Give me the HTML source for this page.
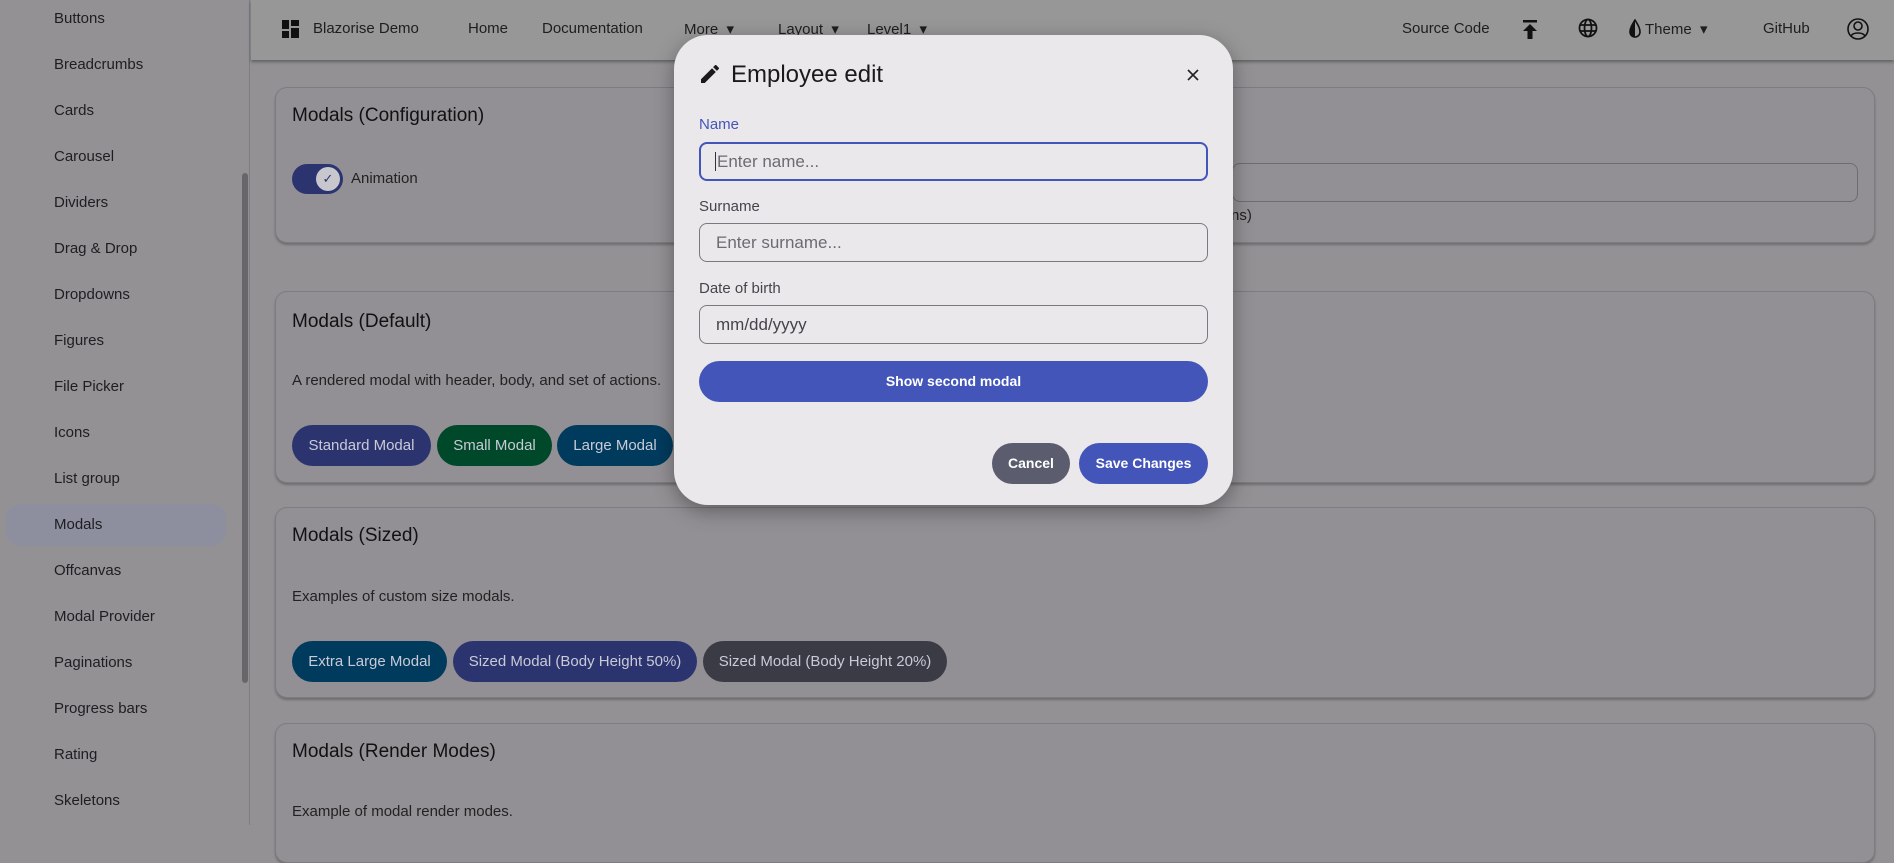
<!DOCTYPE html>
<html style="background:#939194"><head><meta charset="utf-8"><style>
*{box-sizing:border-box;margin:0;padding:0}
html,body{background:#939194}
body{width:1894px;height:825px;overflow:hidden;font-family:"Liberation Sans",sans-serif;color:#1b1b1f;position:relative}
.abs{position:absolute}
.bg{left:0;top:0;width:1894px;height:825px;background:#939194}
.side{left:0;top:0;width:250px;height:825px;background:#939194;border-right:1px solid #7e7d80}
.side div{position:absolute;left:54px;font-size:15px;color:#1e1d22}
.nav{left:251px;top:0;width:1643px;height:60px;background:#979797;box-shadow:0 2px 3px rgba(0,0,0,.35)}
.nav span{position:absolute;top:20px;font-size:15px;color:#1e1e1e}
.card{position:absolute;left:275px;width:1600px;border:1px solid #7d7c80;border-radius:12px;box-shadow:0 2px 2px rgba(0,0,0,.25);background:#929094}
.ct{position:absolute;left:16px;font-size:19px;color:#111}
.cd{position:absolute;left:16px;font-size:15px;color:#222}
.btn{position:absolute;height:41px;border-radius:21px;color:#c9cad6;font-size:15px;line-height:41px;text-align:center}
.modal{left:674px;top:35px;width:559px;height:470px;background:#ebe8ec;border-radius:34px;box-shadow:0 6px 20px rgba(0,0,0,.35)}
.lbl{position:absolute;left:25px;font-size:15px;color:#45444c}
.inp{position:absolute;left:25px;width:509px;height:39px;border:1px solid #7a7880;border-radius:8px;font-size:17px;color:#6c6a72;padding-left:16px;line-height:37px}
</style></head><body>
<div class="abs bg"></div>
<div class="abs side">
<div style="top:10px">Buttons</div><div style="top:56px">Breadcrumbs</div><div style="top:102px">Cards</div><div style="top:148px">Carousel</div><div style="top:194px">Dividers</div><div style="top:240px">Drag &amp; Drop</div><div style="top:286px">Dropdowns</div><div style="top:332px">Figures</div><div style="top:378px">File Picker</div><div style="top:424px">Icons</div><div style="top:470px">List group</div>
<span class="abs" style="left:6px;top:504px;width:220px;height:42px;background:#8d8f9e;border-radius:14px"></span>
<div style="top:516px">Modals</div><div style="top:562px">Offcanvas</div><div style="top:608px">Modal Provider</div><div style="top:654px">Paginations</div><div style="top:700px">Progress bars</div><div style="top:746px">Rating</div><div style="top:792px">Skeletons</div>
<span class="abs" style="left:242px;top:173px;width:6px;height:510px;background:#67666a;border-radius:3px"></span>
</div>
<div class="abs nav">
<svg class="abs" style="left:31px;top:20px" width="17" height="18" viewBox="0 0 17 18"><rect x="0" y="0" width="7" height="9" fill="#111"/><rect x="9" y="0" width="8" height="6" fill="#111"/><rect x="0" y="11" width="7" height="7" fill="#111"/><rect x="9" y="8" width="8" height="10" fill="#111"/></svg>
<span style="left:62px">Blazorise Demo</span><span style="left:217px">Home</span><span style="left:291px">Documentation</span><span style="left:433px">More &nbsp;▾</span><span style="left:527px">Layout &nbsp;▾</span><span style="left:616px">Level1 &nbsp;▾</span>
<span style="left:1151px">Source Code</span>
<svg class="abs" style="left:1271px;top:20px" width="16" height="20" viewBox="0 0 16 20"><rect x="1" y="0" width="14" height="2.5" fill="#111"/><path d="M8 4 L15 11 H10.5 V19 H5.5 V11 H1 Z" fill="#111"/></svg>
<svg class="abs" style="left:1327px;top:18px" width="20" height="20" viewBox="0 0 20 20" fill="none" stroke="#111" stroke-width="1.8"><circle cx="10" cy="10" r="8.5"/><ellipse cx="10" cy="10" rx="3.5" ry="8.5"/><path d="M1.5 7h17M1.5 13h17"/></svg>
<svg class="abs" style="left:1378px;top:19px" width="12" height="20" viewBox="0 0 12 20"><path d="M6 1 C3 6 1 9 1 13 a5 5 0 0 0 10 0 C11 9 9 6 6 1Z" fill="none" stroke="#111" stroke-width="1.6"/><path d="M6 1 C3 6 1 9 1 13 a5 5 0 0 0 5 5Z" fill="#111"/></svg>
<span style="left:1394px">Theme &nbsp;▾</span><span style="left:1512px">GitHub</span>
<svg class="abs" style="left:1596px;top:17px" width="22" height="24" viewBox="0 0 22 24" fill="none" stroke="#111" stroke-width="1.6"><circle cx="11" cy="12" r="10"/><circle cx="11" cy="9" r="4"/><path d="M4 19c2-4 12-4 14 0"/></svg>
</div>
<div class="card" style="top:87px;height:156px">
<div class="ct" style="top:17px">Modals (Configuration)</div>
<span class="abs" style="left:16px;top:76px;width:51px;height:30px;border-radius:15px;background:#2c3470"></span>
<span class="abs" style="left:40px;top:79px;width:24px;height:24px;border-radius:12px;background:#c9c7ce;color:#2c3470;font-size:13px;text-align:center;line-height:24px">✓</span>
<div class="cd" style="left:75px;top:82px">Animation</div>
<span class="abs" style="left:956px;top:75px;width:626px;height:39px;border:1px solid #6d6c70;border-radius:8px"></span>
<div class="cd" style="left:955px;top:119px">ns)</div>
</div>
<div class="card" style="top:291px;height:192px">
<div class="ct" style="top:19px">Modals (Default)</div>
<div class="cd" style="top:80px">A rendered modal with header, body, and set of actions.</div>
<div class="btn" style="left:16px;top:133px;width:139px;background:#2c3470">Standard Modal</div>
<div class="btn" style="left:161px;top:133px;width:115px;background:#00482a">Small Modal</div>
<div class="btn" style="left:281px;top:133px;width:116px;background:#003b5e">Large Modal</div>
</div>
<div class="card" style="top:507px;height:191px">
<div class="ct" style="top:17px">Modals (Sized)</div>
<div class="cd" style="top:80px">Examples of custom size modals.</div>
<div class="btn" style="left:16px;top:133px;width:155px;background:#003b5e">Extra Large Modal</div>
<div class="btn" style="left:177px;top:133px;width:244px;background:#2c3470">Sized Modal (Body Height 50%)</div>
<div class="btn" style="left:427px;top:133px;width:244px;background:#3b3b46">Sized Modal (Body Height 20%)</div>
</div>
<div class="card" style="top:723px;height:140px">
<div class="ct" style="top:17px">Modals (Render Modes)</div>
<div class="cd" style="top:79px">Example of modal render modes.</div>
</div>
<div class="abs modal">
<svg class="abs" style="left:27px;top:30px" width="18" height="18" viewBox="0 0 18 18"><path d="M0 14.25V18h3.75L14.8 6.94l-3.75-3.75L0 14.25zM17.7 4.04a1 1 0 0 0 0-1.41L15.37.29a1 1 0 0 0-1.41 0l-1.83 1.83 3.75 3.75 1.82-1.83z" fill="#1a1a1a"/></svg>
<div class="abs" style="left:57px;top:26px;font-size:24px;color:#1a1a1a">Employee edit</div>
<svg class="abs" style="left:513px;top:34px" width="12" height="12" viewBox="0 0 12 12" stroke="#222" stroke-width="1.6"><path d="M1 1L11 11M11 1L1 11"/></svg>
<div class="lbl" style="top:81px;color:#4355b9">Name</div>
<div class="inp" style="top:107px;border:2px solid #4355b9;padding-left:14px;line-height:35px"><span style="border-left:1px solid #333;padding-left:1px">Enter name...</span></div>
<div class="lbl" style="top:163px">Surname</div>
<div class="inp" style="top:188px">Enter surname...</div>
<div class="lbl" style="top:245px">Date of birth</div>
<div class="inp" style="top:270px;color:#45444c">mm/dd/yyyy</div>
<div class="btn" style="left:25px;top:326px;width:509px;background:#4355b9;color:#fff;font-weight:bold;font-size:14px">Show second modal</div>
<div class="btn" style="left:318px;top:408px;width:78px;background:#5b5c6e;color:#fff;font-weight:bold;font-size:14px">Cancel</div>
<div class="btn" style="left:405px;top:408px;width:129px;background:#4355b9;color:#fff;font-weight:bold;font-size:14px">Save Changes</div>
</div>
</body></html>
